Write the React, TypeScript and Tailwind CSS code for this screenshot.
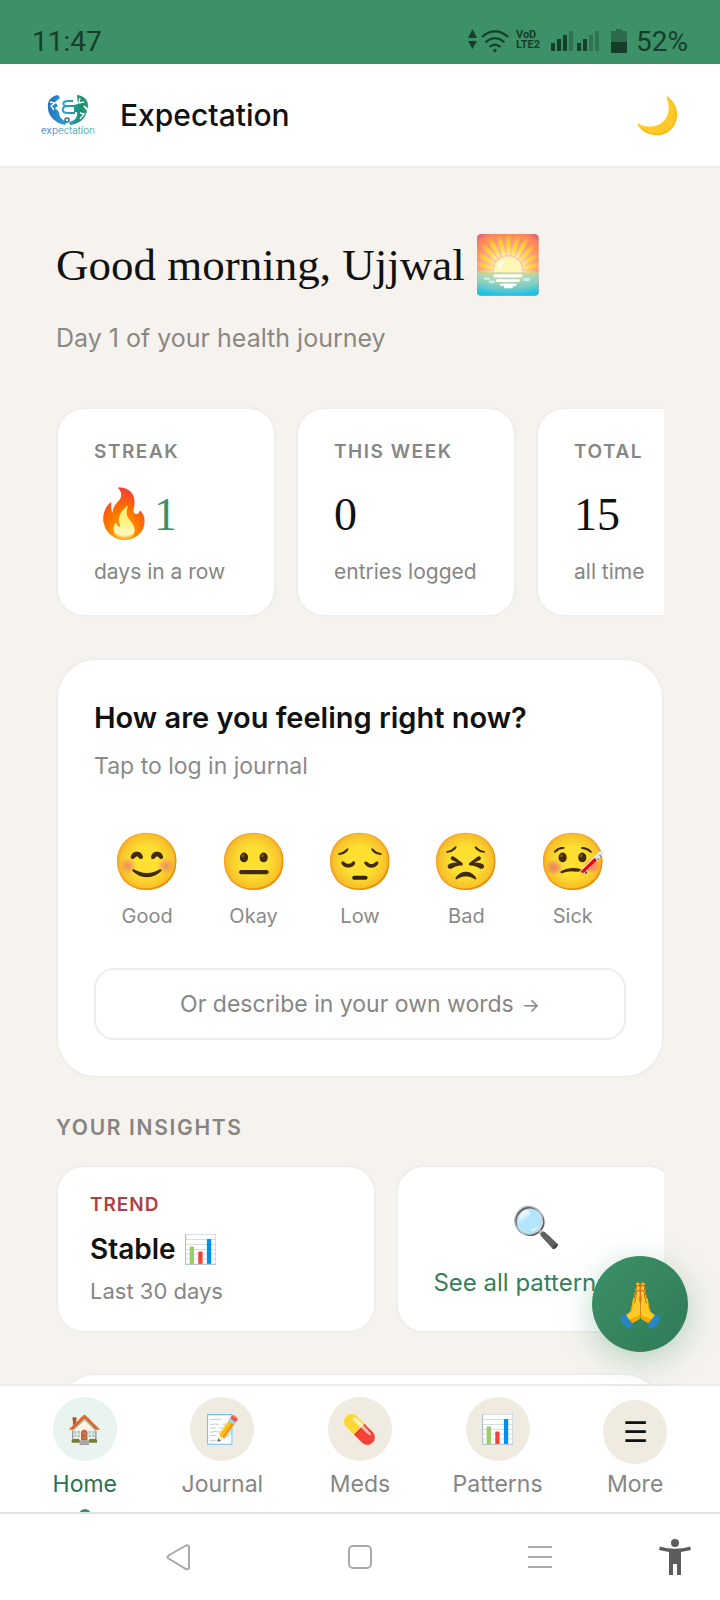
import { clsx } from "clsx";

const stats = [
  { label: "STREAK", icon: "🔥", value: "1", note: "days in a row" },
  { label: "THIS WEEK", value: "0", note: "entries logged" },
  { label: "TOTAL", value: "15", note: "all time" },
];

const moods = [
  { emoji: "😊", label: "Good" },
  { emoji: "😐", label: "Okay" },
  { emoji: "😔", label: "Low" },
  { emoji: "😣", label: "Bad" },
  { emoji: "🤒", label: "Sick" },
];

const tabs = [
  { icon: "🏠", label: "Home", active: true },
  { icon: "📝", label: "Journal" },
  { icon: "💊", label: "Meds" },
  { icon: "📊", label: "Patterns" },
];

function StatusBar() {
  return (
    <div className="flex h-16 shrink-0 items-end justify-between bg-[#3d9166] px-8 pb-1 font-['Roboto',sans-serif] text-[28px] leading-9 text-[#163f2b]">
      <span>11:47</span>
      <div className="flex items-center">
        <svg className="mb-1" width="44" height="28" viewBox="0 0 44 28" fill="none" aria-hidden="true">
          <path d="M0 12 4.500 3 9 12ZM0 15h9l-4.500 8Z" fill="#163f2b" />
          <g stroke="#163f2b" strokeWidth="2.200">
            <path d="M14 11c8-7.500 18-7.500 26 0" />
            <path d="M17.500 16.500c6-5.500 13-5.500 19 0" />
            <path d="M21.500 21c3.500-3 7.500-3 11 0" />
          </g>
          <circle cx="27" cy="24.500" r="1.700" fill="#163f2b" />
        </svg>
        <span className="mb-1 ml-1 grid text-[11px] leading-[10px] font-bold">
          <span>VoD</span>
          <span>LTE2</span>
        </span>
        <svg className="mb-1 ml-2" width="80" height="28" viewBox="0 0 80 28" fill="#163f2b" aria-hidden="true">
          <path d="M3 17h4v8H3zM9 13h4v12H9zM15 9h4v16h-4zM29 17h4v8h-4zM35 13h4v12h-4z" />
          <path d="M21 5h4v20h-4zM41 9h4v16h-4zM47 5h4v20h-4z" opacity=".35" />
          <path d="M68 3h6v2h5v12H63V5h5z" opacity=".45" />
          <path d="M63 16h16v11H63z" />
        </svg>
        <span className="ml-2">52%</span>
      </div>
    </div>
  );
}

function Logo() {
  return (
    <svg width="56" height="44" viewBox="0 0 56 44" fill="none" role="img" aria-label="expectation">
      <defs>
        <linearGradient id="logo-ink" x1="0" x2="56" y1="0" y2="0" gradientUnits="userSpaceOnUse">
          <stop stopColor="#2457b8" />
          <stop offset=".45" stopColor="#2aa3cf" />
          <stop offset=".75" stopColor="#1b8f69" />
          <stop offset="1" stopColor="#3cc29a" />
        </linearGradient>
      </defs>
      <path
        d="M18 2C11 3 7 8 8 15c0 8 7 15 17 17l2-3c-5-2-8-5-8-10l-4-4 3-2-3-4 5-4ZM37 2c8 1 12 6 11 13 0 1-3-3-5-2l4 5c-2 8-8 13-17 14l-1-3c6-1 9-5 8-10h-3v-7l4-1Z"
        fill="url(#logo-ink)"
      />
      <path d="m10 9 5 1-4 3 3 4M40 5l-1 5 5-1M40 20l4 1-4 5" stroke="#ffffff" strokeWidth="1.300" />
      <path d="M33 8h-5c-6 0-6 5-1 5h12M28 13c-7 0-7 7 0 7h7" stroke="url(#logo-ink)" strokeWidth="2" />
      <circle cx="27" cy="27" r="2" stroke="#2b6f8f" strokeWidth="1.500" />
      <text x="28" y="41" textAnchor="middle" fontSize="10" fontWeight="300" fontFamily="Inter, sans-serif" fill="url(#logo-ink)">
        expectation
      </text>
    </svg>
  );
}

function Header() {
  return (
    <header className="flex shrink-0 items-center border-b-2 border-[#ebebea] bg-white px-10 py-6">
      <Logo />
      <h1 className="ml-6 text-[30px] leading-[54px] font-medium">Expectation</h1>
      <button type="button" aria-label="Dark mode" className="ml-auto text-[36px] leading-[52px]">
        🌙
      </button>
    </header>
  );
}

function StatCard({ label, icon, value, note }: { label: string; icon?: string; value: string; note: string }) {
  return (
    <div className="w-[220px] shrink-0 rounded-[28px] border-2 border-[#eeeeed] bg-white px-9 pt-[31px] pb-[29px]">
      <div className="text-[19px] leading-6 font-semibold tracking-[0.08em] text-[#868686]">{label}</div>
      <div
        className={clsx(
          "mt-5 flex h-[60px] items-center font-['Liberation_Serif',serif] text-[46px]",
          icon && "text-[#3d9166]",
        )}
      >
        {icon ? <span className="text-[48px]">{icon}</span> : null}
        {value}
      </div>
      <div className="mt-[14px] text-[21px] leading-7 text-[#868686]">{note}</div>
    </div>
  );
}

function MoodCard() {
  return (
    <section className="mt-[41px] rounded-[40px] border-2 border-[#eeeeed] bg-white px-9 pt-10 pb-9">
      <h3 className="text-[29px] leading-9 font-semibold">How are you feeling right now?</h3>
      <p className="mt-4 text-[23px] leading-7 text-[#8a8a8a]">Tap to log in journal</p>
      <div className="mt-[49px] grid grid-cols-5">
        {moods.map((mood) => (
          <button key={mood.label} type="button" className="flex flex-col items-center gap-[9px]">
            <span className="text-[56px] leading-[64px]">{mood.emoji}</span>
            <span className="text-[20px] leading-7 text-[#8a8a8a]">{mood.label}</span>
          </button>
        ))}
      </div>
      <button
        type="button"
        className="mt-[38px] flex h-[72px] w-full items-center justify-center gap-2 rounded-[20px] border-2 border-[#eeeeee] text-[23px] text-[#868686]"
      >
        Or describe in your own words <span className="pt-1 text-[19px]">→</span>
      </button>
    </section>
  );
}

function Insights() {
  return (
    <section>
      <h3 className="mt-9 text-[21px] leading-7 font-semibold tracking-[0.08em] text-[#868482]">YOUR INSIGHTS</h3>
      <div className="mt-[23px] flex gap-5 overflow-hidden">
        <div className="w-80 shrink-0 rounded-[28px] border-2 border-[#eeeeed] bg-white px-8 py-[26px]">
          <div className="text-[19px] leading-6 font-semibold tracking-wider text-[#ae4145]">TREND</div>
          <div className="mt-[14px] text-[28px] leading-9 font-semibold">Stable 📊</div>
          <div className="mt-[10px] text-[22px] leading-7 text-[#868686]">Last 30 days</div>
        </div>
        <button
          type="button"
          className="flex w-[280px] shrink-0 flex-col items-center justify-center gap-4 rounded-[28px] border-2 border-[#eeeeed] bg-white text-[#35805a]"
        >
          <span className="text-[40px] leading-[52px]">🔍</span>
          <span className="text-[24px] leading-7 whitespace-nowrap">See all patterns →</span>
        </button>
      </div>
    </section>
  );
}

function TabBar() {
  return (
    <nav className="flex h-32 shrink-0 items-start overflow-hidden border-t-2 border-[#ebebea] bg-white px-4 pt-[11px] text-[23px] leading-7 text-[#868686]">
      {tabs.map((tab) => (
        <a
          key={tab.label}
          href="#"
          className={clsx("flex flex-1 flex-col items-center gap-[9px]", tab.active && "text-[#2c7050]")}
        >
          <span
            className={clsx(
              "flex size-16 items-center justify-center rounded-full text-[28px]",
              tab.active ? "bg-[#e9f3f0]" : "bg-[#f0ebe1]",
            )}
          >
            {tab.icon}
          </span>
          {tab.label}
          {tab.active ? <span className="mt-[2px] size-3 rounded-full bg-[#3d9166]" /> : null}
        </a>
      ))}
      <button type="button" className="flex flex-1 flex-col items-center gap-1.5 pt-[3px]">
        <span className="flex size-16 items-center justify-center rounded-full bg-[#f0ebe1] text-[28px] text-[#111111]">
          ☰
        </span>
        More
      </button>
    </nav>
  );
}

function SystemNav() {
  return (
    <div className="grid h-[88px] shrink-0 grid-cols-8 place-items-center border-t-2 border-[#dde3e9] bg-white">
      <button type="button" aria-label="Back" className="col-span-2 col-start-2">
        <svg width="28" height="30" viewBox="0 0 28 30" fill="none" stroke="#a9a9a9" strokeWidth="2">
          <path d="M20 3.500 2.500 13.500q-2 1.500 0 3L20 27q3 1 3-1.500v-20q0-3-3-2Z" />
        </svg>
      </button>
      <button type="button" aria-label="Home" className="col-span-2">
        <svg width="26" height="26" viewBox="0 0 26 26" fill="none" stroke="#a9a9a9" strokeWidth="2">
          <rect x="2" y="2" width="22" height="22" rx="4" />
        </svg>
      </button>
      <button type="button" aria-label="Recents" className="col-span-2">
        <svg width="26" height="26" viewBox="0 0 26 26" fill="none" stroke="#a9a9a9" strokeWidth="2">
          <path d="M1 3h24M1 13h24M1 23h24" />
        </svg>
      </button>
      <button type="button" aria-label="Accessibility">
        <svg width="34" height="38" viewBox="0 0 34 38" fill="#5c5c5c">
          <circle cx="17" cy="5" r="4" />
          <path d="M2 8.500c10 3 20 3 30 0l1 3.500-10 2v23h-4V26h-4v11h-4V14L1 12Z" />
        </svg>
      </button>
    </div>
  );
}

export default function App() {
  return (
    <div className="flex h-screen flex-col bg-[#f6f3ee] font-['Inter',sans-serif] text-[#111111]">
      <StatusBar />
      <Header />
      <div className="relative min-h-0 flex-1">
        <main className="h-full overflow-hidden px-14 pt-[62px]">
          <h2 className="flex items-center gap-2 font-['Liberation_Serif',serif] text-[45px] leading-[70px]">
            Good morning, Ujjwal <span className="text-[56px]">🌅</span>
          </h2>
          <p className="mt-[18px] text-[25px] leading-10 text-[#8b8782]">Day 1 of your health journey</p>
          <div className="mt-[49px] flex gap-5 overflow-hidden">
            {stats.map((stat) => (
              <StatCard key={stat.label} {...stat} />
            ))}
          </div>
          <MoodCard />
          <Insights />
          <section className="mt-10 h-40 rounded-[40px] border-2 border-[#eeeeed] bg-white" />
        </main>
        <button
          type="button"
          aria-label="Support"
          className="absolute right-8 bottom-8 flex size-24 items-center justify-center rounded-full bg-gradient-to-br from-[#3d9166] to-[#2f7a57] text-[44px] shadow-[0_8px_32px_rgba(61,145,102,0.35)]"
        >
          🙏
        </button>
      </div>
      <TabBar />
      <SystemNav />
    </div>
  );
}
